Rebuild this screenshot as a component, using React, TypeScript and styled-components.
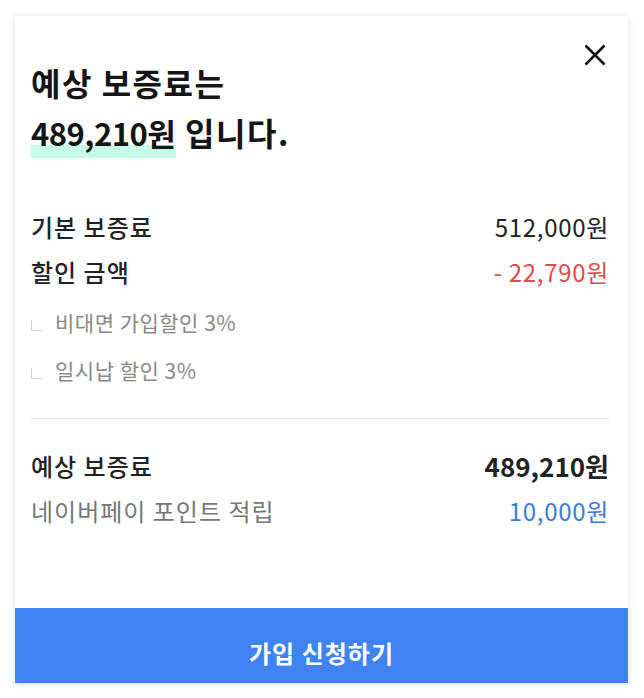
import React from 'react';
import styled, { createGlobalStyle } from 'styled-components';

const font = '"Noto Sans CJK KR", "Noto Sans", sans-serif';

const Global = createGlobalStyle`
  body {
    margin: 0;
    background: #ffffff;
    font-family: ${font};
  }
`;

const Page = styled.div`
  padding: 16px 16px 15px 15px;
`;

const Card = styled.section`
  position: relative;
  width: 613px;
  height: 667px;
  background: #fff;
  box-shadow: 0 1px 6px rgba(0, 0, 0, 0.14);
  display: flex;
  flex-direction: column;
`;

const Body = styled.div`
  flex: 1;
  padding: 41px 19px 0 16px;
  display: flex;
  flex-direction: column;
`;

const Close = styled.button`
  position: absolute;
  top: 24px;
  right: 18px;
  width: 30px;
  height: 30px;
  border: 0;
  padding: 0;
  background: none;
  display: flex;
  align-items: center;
  justify-content: center;
`;

const Title = styled.h1`
  margin: 0;
  font-size: 32px;
  line-height: 50px;
  font-weight: 700;
  color: #151515;
  letter-spacing: 1.5px;
`;

const Mark = styled.span`
  font-size: 31px;
  letter-spacing: -0.5px;
  padding: 0 1px 3px 0;
  background: linear-gradient(transparent 73%, #c4fbe9 73%);
`;

const Rows = styled.div`
  margin-top: 46px;
  display: flex;
  flex-direction: column;
`;

const Row = styled.div`
  display: flex;
  justify-content: space-between;
  align-items: center;
  height: 45px;
`;

const Label = styled.span<{ $muted?: boolean }>`
  font-size: 24px;
  font-weight: ${(p) => (p.$muted ? 400 : 500)};
  color: ${(p) => (p.$muted ? '#777' : '#222')};
  letter-spacing: 1px;
`;

const Value = styled.span<{ $tone?: 'red' | 'blue'; $strong?: boolean }>`
  font-size: ${(p) => (p.$strong ? '26px' : '24px')};
  font-weight: ${(p) => (p.$strong ? 700 : 400)};
  color: ${(p) => (p.$tone === 'red' ? '#e5484d' : p.$tone === 'blue' ? '#3a7bd9' : '#222')};
  letter-spacing: ${(p) => (p.$strong ? '0' : '0.7px')};
`;

const SubList = styled.div`
  display: flex;
  flex-direction: column;
  margin-top: 4px;
`;

const Sub = styled.div`
  display: flex;
  align-items: center;
  height: 48px;
  font-size: 21px;
  color: #888;
  letter-spacing: 0.5px;
`;

const Corner = styled.span`
  width: 10px;
  height: 10px;
  border-left: 1px solid #d0d0d0;
  border-bottom: 1px solid #d0d0d0;
  margin: 0 13px 0 0;
  position: relative;
  top: 3px;
`;

const Divider = styled.hr`
  border: 0;
  border-top: 1px solid #e8e8e8;
  margin: 24px 0 24px;
`;

const Submit = styled.button`
  height: 75px;
  border: 0;
  background: #3f82f2;
  color: #fff;
  font-family: ${font};
  font-size: 24px;
  font-weight: 700;
  letter-spacing: 1px;
  padding-top: 14px;
`;

export default function App() {
  return (
    <Page>
      <Global />
      <Card>
        <Close aria-label="닫기">
          <svg width="24" height="24" viewBox="0 0 24 24">
            <path d="M2.5 2.5 L21.5 21.5 M21.5 2.5 L2.5 21.5" stroke="#111" strokeWidth="2.6" />
          </svg>
        </Close>
        <Body>
          <Title>
            예상 보증료는
            <br />
            <Mark>489,210원</Mark> 입니다.
          </Title>
          <Rows>
            <Row>
              <Label>기본 보증료</Label>
              <Value>512,000원</Value>
            </Row>
            <Row>
              <Label>할인 금액</Label>
              <Value $tone="red">- 22,790원</Value>
            </Row>
            <SubList>
              <Sub>
                <Corner />
                비대면 가입할인 3%
              </Sub>
              <Sub>
                <Corner />
                일시납 할인 3%
              </Sub>
            </SubList>
          </Rows>
          <Divider />
          <Row>
            <Label>예상 보증료</Label>
            <Value $strong>489,210원</Value>
          </Row>
          <Row>
            <Label $muted>네이버페이 포인트 적립</Label>
            <Value $tone="blue">10,000원</Value>
          </Row>
        </Body>
        <Submit>가입 신청하기</Submit>
      </Card>
    </Page>
  );
}
